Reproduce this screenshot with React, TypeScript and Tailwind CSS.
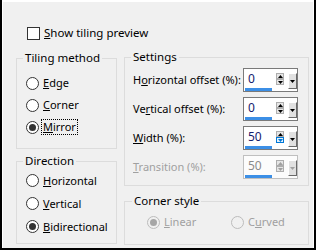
const font = { fontFamily: '"Noto Sans", "Open Sans", sans-serif' };

type RadioProps = { label: React.ReactNode; checked?: boolean; disabled?: boolean; focus?: boolean };

const Radio = ({ label, checked, disabled, focus }: RadioProps) => (
  <div className="flex h-[22px] items-center gap-[2px]">
    <span
      className={
        disabled
          ? 'flex h-[13px] w-[13px] items-center justify-center rounded-full border border-[#bcbcbc] bg-[#f0f0f0]'
          : 'flex h-[13px] w-[13px] items-center justify-center rounded-full border border-[#333333] bg-white'
      }
    >
      {checked && (
        <span className={disabled ? 'h-[7px] w-[7px] rounded-full bg-[#a6a6a6]' : 'h-[7px] w-[7px] rounded-full bg-[#333333]'} />
      )}
    </span>
    <span
      className={
        (disabled ? 'text-[#a0a0a0] ' : 'text-black ') +
        (focus ? 'border border-dotted border-black px-[1px] leading-[14px]' : 'px-[2px] leading-[16px]')
      }
    >
      {label}
    </span>
  </div>
);

const Tri = ({ down, color }: { down?: boolean; color: string }) => (
  <svg width="5" height="3" viewBox="0 0 5 3">
    <path d={down ? 'M0 0H5L2.5 3Z' : 'M0 3H5L2.5 0Z'} fill={color} />
  </svg>
);

const Spin = ({ value, disabled, hot }: { value: string; disabled?: boolean; hot?: boolean }) => {
  const arrow = disabled ? '#a0a0a0' : '#000000';
  return (
    <div
      className={
        disabled
          ? 'flex h-[24px] w-[55px] shrink-0 items-start border border-[#bfbfbf] bg-[#fcfcfc]'
          : 'flex h-[24px] w-[55px] shrink-0 items-start border border-[#7a7a7a] bg-white'
      }
    >
      <div className="ml-[1px] flex w-[29px] flex-col">
        <span
          className={
            disabled
              ? 'flex h-[19px] items-center pl-[3px] text-[12px] text-[#8a8a8a]'
              : 'flex h-[19px] items-center pl-[3px] text-[12px] text-[#14206e]'
          }
        >
          {value}
        </span>
        <span className="h-[3px] w-[27px] bg-[#3c8fe6]" />
      </div>
      <div className="ml-[2px] mt-[4px] flex w-[8px] flex-col">
        <span className="flex h-[6px] items-center justify-center border border-[#adadad] bg-[#e6e6e6]">
          <Tri color={arrow} />
        </span>
        <span
          className={
            hot
              ? 'flex h-[6px] items-center justify-center border border-[#0078d7] bg-[#e5f1fb]'
              : 'flex h-[6px] items-center justify-center border border-[#adadad] bg-[#e6e6e6]'
          }
        >
          <Tri down color={hot ? '#0078d7' : arrow} />
        </span>
      </div>
      <div className="ml-[4px] mt-[4px] flex h-[16px] w-[9px] items-center justify-center border-b border-l border-r border-t border-b-[#696969] border-l-white border-r-[#696969] border-t-white bg-[#e1e1e1]">
        <Tri down color={arrow} />
      </div>
    </div>
  );
};

const Row = ({ label, children, disabled }: { label: React.ReactNode; children: React.ReactNode; disabled?: boolean }) => (
  <div className="flex items-center justify-between">
    <span className={disabled ? 'whitespace-nowrap text-[#a0a0a0]' : 'whitespace-nowrap text-black'}>{label}</span>
    {children}
  </div>
);

export default function App() {
  return (
    <div
      className="h-[250px] w-[316px] border-b-2 border-l-2 border-r-2 border-black bg-[#f0f0f0] text-[11px] leading-[16px]"
      style={font}
    >
      <div className="h-full border-l border-r border-t-2 border-white pl-[13px] pt-[23px]">
        <div className="flex h-[16px] items-center gap-[4px] pl-[11px]">
          <span className="h-[13px] w-[13px] border border-[#333333] bg-white" />
          <span className="text-[11.5px]">
            <u>S</u>how tiling preview
          </span>
        </div>
        <div className="mt-[8px] flex gap-[7px]">
          <div className="mt-[1px] flex w-[101px] flex-col gap-[4px]">
            <fieldset className="h-[99px] border border-[#dcdcdc]">
              <legend className="ml-[6px] px-[2px] text-[11.5px] leading-[16px]">Tiling method</legend>
              <div className="flex flex-col pl-[9px] pt-[6px]">
                <Radio label={<><u>E</u>dge</>} />
                <Radio label={<><u>C</u>orner</>} />
                <Radio label={<><u>M</u>irror</>} checked focus />
              </div>
            </fieldset>
            <fieldset className="h-[91px] border border-[#dcdcdc]">
              <legend className="ml-[6px] px-[2px] text-[11.5px] leading-[16px]">Direction</legend>
              <div className="flex flex-col pl-[9px] [&>div]:h-[23px]">
                <Radio label={<><u>H</u>orizontal</>} />
                <Radio label={<><u>V</u>ertical</>} />
                <Radio label={<><u>B</u>idirectional</>} checked />
              </div>
            </fieldset>
          </div>
          <div className="flex w-[185px] flex-col gap-[7px]">
            <fieldset className="h-[137px] border border-[#dcdcdc]">
              <legend className="ml-[6px] px-[2px] text-[11.5px] leading-[16px]">Settings</legend>
              <div className="flex flex-col gap-[5px] pl-[8px] pr-[10px] pt-[3px]">
                <Row label={<>H<u>o</u>rizontal offset (%):</>}>
                  <Spin value="0" />
                </Row>
                <Row label={<>Ve<u>r</u>tical offset (%):</>}>
                  <Spin value="0" />
                </Row>
                <Row label={<><u>W</u>idth (%):</>}>
                  <Spin value="50" hot />
                </Row>
                <Row label={<><u>T</u>ransition (%):</>} disabled>
                  <Spin value="50" disabled />
                </Row>
              </div>
            </fieldset>
            <fieldset className="h-[52px] border border-[#dcdcdc]">
              <legend className="ml-[7px] px-[2px] text-[11.5px] leading-[16px]">Corner style</legend>
              <div className="flex pl-[22px] pt-[2px]">
                <div className="w-[84px]">
                  <Radio label={<><u>L</u>inear</>} checked disabled />
                </div>
                <Radio label={<>C<u>u</u>rved</>} disabled />
              </div>
            </fieldset>
          </div>
        </div>
      </div>
    </div>
  );
}
